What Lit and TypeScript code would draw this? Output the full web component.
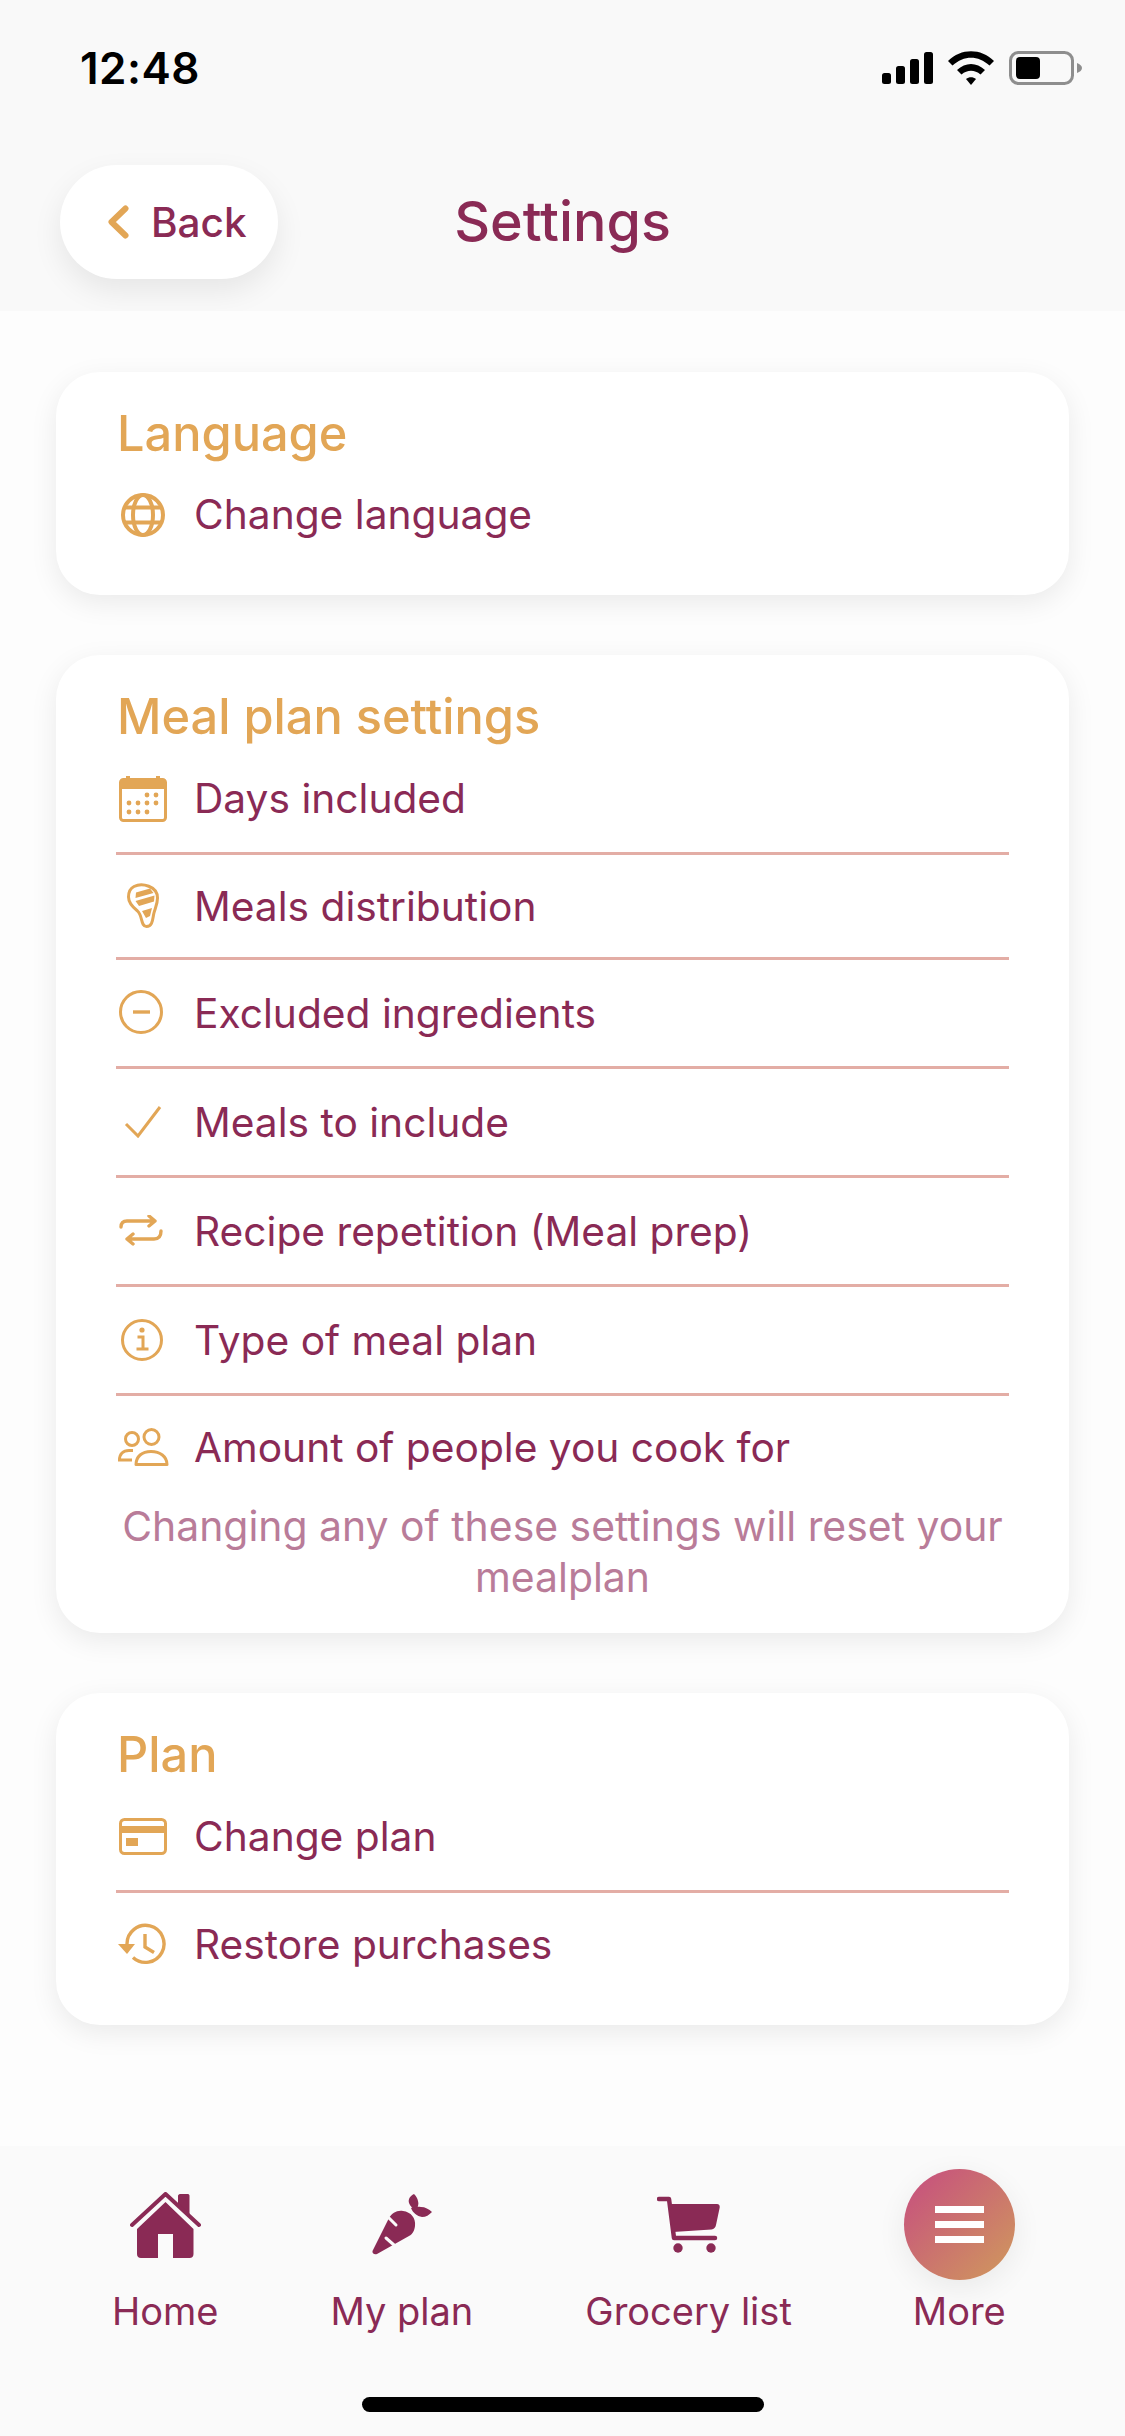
import { LitElement, css, html, svg } from 'lit';
import { customElement } from 'lit/decorators.js';

const orange = '#e2a656';
const plum = '#8a2a55';

// settings icons are all 52 wide, the viewBox shifts each drawing to its place
const icons = {
  globe: html`<svg width="52" height="46" viewBox="-4 0 52 46" fill="none" stroke="${orange}" stroke-width="4">
    <circle cx="22" cy="23" r="20"/><ellipse cx="22" cy="23" rx="10" ry="20"/>
    <path d="M4 15.500h36M4 30.500h36"/></svg>`,
  calendar: html`<svg width="52" height="46" viewBox="-2 0 52 46" fill="none">
    <rect x="1.500" y="3.500" width="45" height="41" rx="3" stroke="${orange}" stroke-width="3"/>
    <path d="M3 4h42v9H3z" fill="${orange}"/><path d="M7 0h4v4H7zM37 0h4v4h-4z" fill="${orange}"/>
    <g fill="${orange}">
      <circle cx="28" cy="19" r="2.400"/><circle cx="37" cy="19" r="2.400"/>
      <circle cx="10" cy="27" r="2.400"/><circle cx="19" cy="27" r="2.400"/><circle cx="28" cy="27" r="2.400"/><circle cx="37" cy="27" r="2.400"/>
      <circle cx="10" cy="36" r="2.400"/><circle cx="19" cy="36" r="2.400"/><circle cx="28" cy="36" r="2.400"/>
    </g></svg>`,
  meal: html`<svg width="52" height="46" viewBox="-10 0 52 46" fill="none">
    <path d="M7 3.500C15-.5 30.500 3 30.500 15c0 7-3 11-4 17-1 6-1.500 11.500-7 11.500-6 0-3.500-10.500-9-15.500C5.500 24 1.500 20 1.500 14 1.500 9 3 5.500 7 3.500z" stroke="${orange}" stroke-width="3"/>
    <path d="M9 9.500l14-4 3.500 4.500-18 5zM8.500 18l19-5.500-.5 6-15 4.500zM15 28l10-3-2 8-4 2z" fill="${orange}"/></svg>`,
  minus: html`<svg width="52" height="46" viewBox="-2 0 52 46" fill="none" stroke="${orange}" stroke-width="3">
    <circle cx="22" cy="22" r="20.500"/><path d="M14 22h17" stroke-width="3.400"/></svg>`,
  check: html`<svg width="52" height="32" viewBox="-8 0 52 32" fill="none" stroke="${orange}" stroke-width="3">
    <path d="M1 18l12 12L35 1"/></svg>`,
  repeat: html`<svg width="52" height="32" viewBox="-2 0 52 32" fill="none" stroke="${orange}" stroke-width="3.400" stroke-linecap="round" stroke-linejoin="round">
    <path d="M2 12c0-4 2-6 6-6h28M30 1l6 5-6 5M42 16c0 5-2 8-7 8H8M14 19l-6 5 6 5"/></svg>`,
  info: html`<svg width="52" height="44" viewBox="-4 0 52 44" fill="none" stroke="${orange}" stroke-width="3">
    <circle cx="21" cy="22" r="19.500"/>
    <circle cx="21" cy="12" r="2.600" fill="${orange}" stroke="none"/>
    <path d="M16.500 19H22v12M15.500 31h12"/></svg>`,
  people: html`<svg width="52" height="38" viewBox="-1 0 52 38" fill="none" stroke="${orange}" stroke-width="3">
    <circle cx="14" cy="11" r="6.500"/><circle cx="33.500" cy="9" r="7.500"/>
    <path d="M15 22.500H11C5 22.500 1.500 26 1.500 32H14"/>
    <path d="M18 36.500c0-8 6-13 15-13s16 5 16 13z" stroke-linejoin="round"/></svg>`,
  card: html`<svg width="52" height="38" viewBox="-2 0 52 38" fill="none">
    <rect x="1.500" y="1.500" width="45" height="34" rx="4" stroke="${orange}" stroke-width="3"/>
    <path d="M2 8h44v7H2zM7 20h12v8H7z" fill="${orange}"/></svg>`,
  history: html`<svg width="52" height="42" viewBox="-1 0 52 42" fill="none" stroke="${orange}" stroke-width="3.400">
    <path d="M9 21A18.500 18.500 0 1 1 15 34.500"/>
    <path d="M0 21h17l-8 10z" fill="${orange}" stroke="none"/>
    <path d="M27 11v13l9 5.500"/></svg>`,
};

const homeIcon = svg`<svg width="71" height="66" viewBox="0 0 71 66" fill="${plum}">
  <path d="M48 15V4c0-1 .8-2 2-2h8c1 0 1.500 1 1.500 2v20z"/>
  <path d="M2 33L35.500 2 69 33" fill="none" stroke="${plum}" stroke-width="4" stroke-linecap="round" stroke-linejoin="round"/>
  <path d="M35.500 10L7 37v25c0 2.500 1.500 4 4 4h17V42h15v24h16.500c2.500 0 4-1.500 4-4V37z"/></svg>`;

const carrotIcon = svg`<svg width="60" height="61" viewBox="0 0 60 61" fill="${plum}">
  <path d="M.5 57L17 24c3-5 8-8 14-7 8 1 13 7 12 15-.5 4-2 8-6 10L5 60c-3 1-5-1-4.500-3z"/>
  <path d="M42 0c-4 2-6 5-5 9 1 3 4 6 7 7 2-3 3-6 2-9-.5-3-2-5-4-7zM39 14c2 5 6 8 11 9 4 0 7-2 10-5-3-3-7-5-11-5-4-.5-7 0-10 1z"/>
  <path d="M17 24l7 7M14 44l8 7" stroke="#fafafa" stroke-width="3" stroke-linecap="round" fill="none"/></svg>`;

const cartIcon = svg`<svg width="63" height="57" viewBox="0 0 63 57" fill="${plum}">
  <path d="M2 3h10l5 39h41" fill="none" stroke="${plum}" stroke-width="4.500" stroke-linecap="round" stroke-linejoin="round"/>
  <path d="M11 8h49c2 0 3 1.500 2.700 3.500L59 29c-.5 2.500-2 4-4.500 4.500L16 36z"/>
  <circle cx="21" cy="52" r="4.700"/><circle cx="54" cy="52" r="4.700"/></svg>`;

const sections = [
  { title: 'Language', rows: [['globe', 'Change language']] },
  {
    title: 'Meal plan settings',
    rows: [
      ['calendar', 'Days included'],
      ['meal', 'Meals distribution'],
      ['minus', 'Excluded ingredients'],
      ['check', 'Meals to include'],
      ['repeat', 'Recipe repetition (Meal prep)'],
      ['info', 'Type of meal plan'],
      ['people', 'Amount of people you cook for'],
    ],
    note: 'Changing any of these settings will reset your mealplan',
  },
  { title: 'Plan', rows: [['card', 'Change plan'], ['history', 'Restore purchases']] },
];

@customElement('app-root')
export class AppRoot extends LitElement {
  static styles = css`
    :host {
      display: flex;
      flex-direction: column;
      min-height: 100vh;
      font-family: Inter, 'Liberation Sans', sans-serif;
      background: #fdfdfd;
      color: #8a2a55;
    }
    .header {
      height: 311px;
      box-sizing: border-box;
      background: #f9f9f9;
      overflow: hidden;
      flex: none;
    }
    .status {
      display: flex;
      justify-content: space-between;
      align-items: center;
      height: 44px;
      padding: 46px 43px 0 80px;
    }
    .time {
      font-size: 44px;
      font-weight: 600;
      color: #000;
      letter-spacing: 0.5px;
    }
    .status-icons {
      display: flex;
      align-items: center;
      gap: 15px;
    }
    .nav {
      display: grid;
      grid-template-columns: 1fr auto 1fr;
      align-items: center;
      margin-top: 75px;
      padding-left: 60px;
    }
    .back {
      justify-self: start;
      display: flex;
      align-items: center;
      gap: 22px;
      box-sizing: border-box;
      width: 218px;
      height: 114px;
      padding-left: 48px;
      border-radius: 57px;
      background: #fff;
      box-shadow: 0 12px 30px rgba(0, 0, 0, 0.08);
      font-size: 40.5px;
      font-weight: 500;
    }
    .title {
      font-size: 55.6px;
      font-weight: 500;
      margin: -3px 0 0 -60px;
    }
    .content {
      flex: 1;
      display: flex;
      flex-direction: column;
      gap: 60px;
      padding: 61px 56px 0;
    }
    .card {
      background: #fff;
      border-radius: 44px;
      padding: 35px 60px 27px;
      box-shadow: 0 8px 28px rgba(0, 0, 0, 0.08);
    }
    .card-title {
      font-size: 48.7px;
      line-height: 54px;
      font-weight: 500;
      margin-left: 1px;
      color: #e2a656;
    }
    .row {
      display: flex;
      align-items: center;
      gap: 25px;
      box-sizing: border-box;
      height: 109px;
      font-size: 40.7px;
      border-bottom: 3px solid #e3ada5;
    }
    .row svg {
      margin-left: 1px;
    }
    .row.first {
      height: 111px;
      padding-top: 1px;
    }
    .row.tight {
      height: 105px;
    }
    .row.last {
      height: 105px;
      padding-bottom: 3px;
      border-bottom: none;
    }
    .row.only {
      height: 107px;
      border-bottom: none;
    }
    .note {
      font-size: 40.9px;
      line-height: 51px;
      text-align: center;
      color: #b97c99;
      margin-bottom: 3px;
    }
    .tabbar {
      flex: none;
      position: relative;
      height: 290px;
      box-sizing: border-box;
      display: flex;
      gap: 112px;
      padding: 23px 0 0 112px;
      background: #fafafa;
    }
    .tab {
      display: flex;
      flex-direction: column;
      align-items: center;
      font-size: 38px;
      line-height: 46px;
    }
    .tab-icon {
      height: 111px;
      margin-bottom: 8px;
      display: flex;
      align-items: center;
      justify-content: center;
    }
    .more {
      width: 111px;
      height: 111px;
      border-radius: 50%;
      display: flex;
      flex-direction: column;
      align-items: center;
      justify-content: center;
      gap: 8px;
      background: linear-gradient(135deg, #c64c80, #d09a5c);
      box-shadow: 0 8px 30px rgba(0, 0, 0, 0.07);
    }
    .more span {
      width: 49px;
      height: 7px;
      background: #fff;
    }
    .home-bar {
      position: absolute;
      left: 362px;
      top: 251px;
      width: 402px;
      height: 15px;
      border-radius: 8px;
      background: #000;
    }
  `;

  rowClass(icon: string, i: number, n: number) {
    if (n === 1) return 'row only';
    if (i === n - 1) return 'row last';
    if (i === 0) return 'row first';
    return icon === 'meal' ? 'row tight' : 'row';
  }

  render() {
    return html`
      <div class="header">
        <div class="status">
          <span class="time">12:48</span>
          <div class="status-icons">
            <svg width="51" height="32" viewBox="0 0 51 32" fill="#000">
              <rect x="0" y="21" width="9" height="11" rx="2.500"/>
              <rect x="14" y="14" width="9" height="18" rx="2.500"/>
              <rect x="28" y="7" width="9" height="25" rx="2.500"/>
              <rect x="42" y="0" width="9" height="32" rx="2.500"/>
            </svg>
            <svg width="46" height="34" viewBox="0 0 46 34" fill="#000">
              <path d="M0 10C13-3 33-3 46 10l-4.500 4.500C30 4 16 4 4.500 14.500z"/>
              <path d="M9 19c8.500-8 19.500-8 28 0l-4.500 4.500c-6-5-13-5-19 0z"/>
              <path d="M18 28c3-2.500 7-2.500 10 0l-5 6z"/>
            </svg>
            <svg width="73" height="34" viewBox="0 0 73 34" fill="none">
              <rect x="1.500" y="1.500" width="62" height="31" rx="8" stroke="#8e8e8e" stroke-width="3"/>
              <rect x="7" y="6" width="24" height="22" rx="4" fill="#000"/>
              <path d="M68 12c3 1 5 3 5 5s-2 4-5 5z" fill="#8e8e8e"/>
            </svg>
          </div>
        </div>
        <div class="nav">
          <div class="back">
            <svg width="21" height="34" viewBox="0 0 21 34" fill="none" stroke="${orange}" stroke-width="6" stroke-linecap="round" stroke-linejoin="round">
              <path d="M17.500 3.500L3.500 17l14 13.500"/>
            </svg>
            <span>Back</span>
          </div>
          <div class="title">Settings</div>
          <div></div>
        </div>
      </div>
      <div class="content">
        ${sections.map(s => html`
          <div class="card">
            <div class="card-title">${s.title}</div>
            ${s.rows.map(([icon, label], i) => html`
              <div class="${this.rowClass(icon, i, s.rows.length)}">${icons[icon]}<span>${label}</span></div>
            `)}
            ${s.note ? html`<div class="note">${s.note}</div>` : ''}
          </div>
        `)}
      </div>
      <div class="tabbar">
        <div class="tab"><div class="tab-icon">${homeIcon}</div>Home</div>
        <div class="tab"><div class="tab-icon">${carrotIcon}</div>My plan</div>
        <div class="tab"><div class="tab-icon">${cartIcon}</div>Grocery list</div>
        <div class="tab">
          <div class="tab-icon"><div class="more"><span></span><span></span><span></span></div></div>
          More
        </div>
        <div class="home-bar"></div>
      </div>
    `;
  }
}
